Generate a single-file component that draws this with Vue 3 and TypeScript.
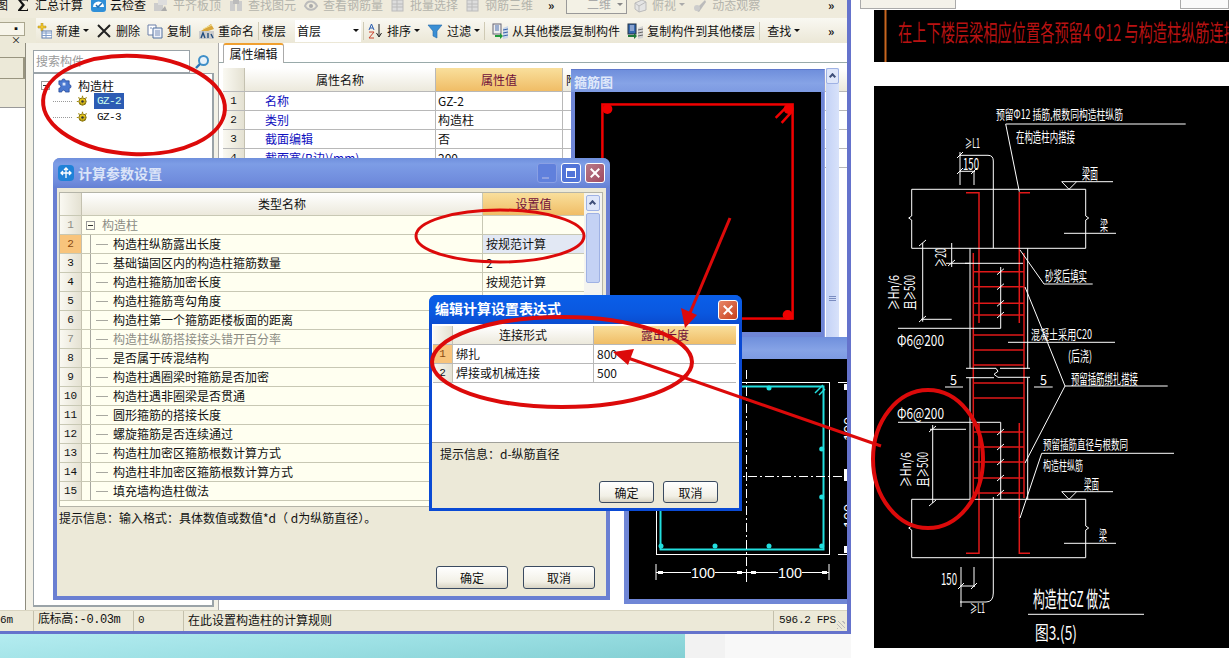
<script setup lang="ts">
type Tool = { icon?: string; label: string; arrow?: boolean; dim?: boolean; sep?: boolean }

const icons: Record<string, string> = {
  sigma: '<path d="M3 2h10v3l-1-1.500H6l4 4.500-4 5h6l1-2v3H3v-1l4-5-4-5z" fill="#111"/>',
  cloud: '<rect x="1" y="1" width="15" height="14" rx="3" fill="#2f8fd8"/><path d="M3 10a5.500 5.500 0 0 1 11 0" fill="#fff"/><path d="M6 8l2 2 4-4" stroke="#2070b8" stroke-width="1.600" fill="none"/>',
  greyA: '<rect x="1" y="6" width="9" height="8" fill="#ccc"/><path d="M5 2h9v6H5z" fill="#ddd"/><path d="M8 14l4-5 2 5z" fill="#aaa"/>',
  greyB: '<path d="M2 4h5v10H2zM9 4h5v10H9z" fill="#ccc"/><path d="M5 2h6v5H5z" fill="#bbb"/>',
  greyC: '<path d="M2 9c2-6 9-6 12 0-3 5-9 5-12 0z" fill="none" stroke="#bbb" stroke-width="2"/><circle cx="8" cy="9" r="2" fill="#aaa"/>',
  greyD: '<rect x="2" y="3" width="11" height="11" fill="#ddd" stroke="#bbb"/><path d="M2 7h11M2 10h11M7 3v11" stroke="#bbb"/>',
  greyE: '<path d="M3 6l7-3 4 2v8l-7 2-4-3z" fill="#e4e4e4" stroke="#bbb"/><path d="M3 6l4 3v6M7 9l7-4" stroke="#bbb" fill="none"/>',
  greyF: '<path d="M3 13L13 3l1 2-7 10z" fill="#bbb"/><circle cx="5" cy="11" r="3" fill="#ccc"/>',
  add: '<path d="M5 0h2v3h3v2H7v3H5V5H2V3h3z" fill="#f2c62c" stroke="#a98a18" stroke-width=".5"/><rect x="6" y="8" width="10" height="7" fill="#fff" stroke="#5c7db0"/><path d="M6 10h10M6 12.500h10M10 8v7" stroke="#7f9cc8"/>',
  del: '<path d="M2 2l12 12M14 2L2 14" stroke="#222" stroke-width="2"/>',
  copy: '<path d="M1 2h8v10H1z" fill="#fff" stroke="#6a7fa8"/><path d="M6 5h9v10H6z" fill="#eef2fa" stroke="#51709f"/><path d="M8 8h5M8 10h5M8 12h5M3 5h2" stroke="#7a90b8"/>',
  rename: '<path d="M3 8L13 1l3 5-9 3z" fill="#d9a63a"/><path d="M5 6l9-4" stroke="#f0de90"/><rect x="1" y="8" width="15" height="8" fill="#ccc"/><path d="M3 15l2-5 2 5M10 10v5M13 11l2 4" stroke="#234d7d" stroke-width="1.400" fill="none"/>',
  sort: '<path d="M12 1v12M9.500 10l2.500 4 2.500-4" stroke="#222" fill="none"/><path d="M2 7l2.500-6L7 7M3 5h3" stroke="#2a5db0" fill="none"/><path d="M2 9h5l-5 6h5" stroke="#c8402a" fill="none"/>',
  filter: '<path d="M1 2h14L10 8v7l-4-2V8z" fill="#3b8fd4" stroke="#2468a8" stroke-width=".6"/>',
  fromFloor: '<rect x="1" y="1" width="8" height="10" fill="#eee" stroke="#667"/><path d="M3 3h4M3 5h4M3 7h4" stroke="#4a6fb0"/><path d="M3 12h5v-2l3 3-3 3v-2H3z" fill="#1f9a3a"/><path d="M11 5l5-2v12l-5 1z" fill="#c9d6ea"/><path d="M11 7l5-1M11 10l5-1M11 13l5-1" stroke="#3a64a8"/>',
  toFloor: '<rect x="1" y="1" width="8" height="10" fill="#3568b0" stroke="#234"/><path d="M3 3h4M3 5h4M3 7h4" stroke="#dde"/><path d="M1 12h6v-2l3 3-3 3v-2H1z" fill="#1f7a3a"/><path d="M11 5l5-2v12l-5 1z" fill="#d4d4d4"/><path d="M11 7l5-1M11 10l5-1M11 13l5-1" stroke="#666"/>',
  search: '<circle cx="9.500" cy="6.500" r="4.500" fill="#e8f2fa" stroke="#3f8fc8" stroke-width="2"/><path d="M6 10l-4 4" stroke="#2c78b8" stroke-width="2.400"/>',
  puzzle: '<path d="M2 3h3a2 2 0 0 1 4 0h4v4a2 2 0 0 1 0 4v4H9a2 2 0 0 0-4 0H2v-4a2 2 0 0 0 0-4z" fill="#4a78d0" stroke="#1c3f90" stroke-width=".7"/><path d="M6 5h3v3H6z" fill="#dbe6fa"/>',
  gear: '<circle cx="8" cy="8" r="4.500" fill="#e5c51c" stroke="#6b5c10"/><circle cx="8" cy="8" r="1.600" fill="#333"/><path d="M8 1v14M1 8h14M3 3l10 10M13 3L3 13" stroke="#a08a12" stroke-width="1.500" stroke-dasharray="2 7.500"/>',
  move: '<rect width="16" height="16" rx="4" fill="#1f82d8"/><path d="M8 3v10M3 8h10M6 5l2-2 2 2M11 6l2 2-2 2M5 6L3 8l2 2" stroke="#fff" stroke-width="1.300" fill="none"/>',
}

const topTools: Tool[] = [
  { icon: 'sigma', label: '汇总计算' },
  { icon: 'cloud', label: '云检查' },
  { icon: 'greyA', label: '平齐板顶', dim: true },
  { icon: 'greyB', label: '查找图元', dim: true },
  { icon: 'greyC', label: '查看钢筋量', dim: true },
  { icon: 'greyD', label: '批量选择', dim: true },
  { icon: 'greyD', label: '钢筋三维', dim: true },
]
const leftTools: Tool[] = [
  { icon: 'add', label: '新建', arrow: true },
  { icon: 'del', label: '删除' },
  { icon: 'copy', label: '复制' },
  { icon: 'rename', label: '重命名' },
]
const rightTools: Tool[] = [
  { icon: 'sort', label: '排序', arrow: true },
  { icon: 'filter', label: '过滤', arrow: true, sep: true },
  { icon: 'fromFloor', label: '从其他楼层复制构件' },
  { icon: 'toFloor', label: '复制构件到其他楼层', sep: true },
  { label: '查找', arrow: true },
]

const propRows = [
  ['名称', 'GZ-2'],
  ['类别', '构造柱'],
  ['截面编辑', '否'],
  ['截面宽(B边)(mm)', '200'],
]

const paramRows: { name: string; value?: string; grey?: boolean; active?: boolean }[] = [
  { name: '构造柱', grey: true },
  { name: '构造柱纵筋露出长度', value: '按规范计算', active: true },
  { name: '基础锚固区内的构造柱箍筋数量', value: '2' },
  { name: '构造柱箍筋加密长度', value: '按规范计算' },
  { name: '构造柱箍筋弯勾角度' },
  { name: '构造柱第一个箍筋距楼板面的距离' },
  { name: '构造柱纵筋搭接接头错开百分率', grey: true },
  { name: '是否属于砖混结构' },
  { name: '构造柱遇圈梁时箍筋是否加密' },
  { name: '构造柱遇非圈梁是否贯通' },
  { name: '圆形箍筋的搭接长度' },
  { name: '螺旋箍筋是否连续通过' },
  { name: '构造柱加密区箍筋根数计算方式' },
  { name: '构造柱非加密区箍筋根数计算方式' },
  { name: '填充墙构造柱做法' },
]

const statusCells = ['6m', '底标高:-0.03m', '0', '在此设置构造柱的计算规则', '596.2 FPS']

// CAD detail, in screenshot coordinates
const stirrups = [271.7, 286.7, 303.3, 315, 335, 350, 365, 383, 398, 432, 447, 462, 478, 493]
const dimTicks = [271.7, 286.7, 303.3, 315, 432, 447, 462, 478, 493].map(
  (y) => `M997 ${y + 3}L1004 ${y - 3}`,
)
const cadWhite = [
  'M1005.700 124H1185.700M1005.700 124L1019.300 191.700',
  'M960 155.300H988Q993.300 155.300 993.300 161V248.300',
  'M960 152V185M974 171V185M960 171.300H975M957 158l6-6M957 174l6-6M971 174l6-6',
  'M911.700 189.300H1085.700M911.700 189.300V216l-3 2 3 2V248.300M1085.700 189.300V216l3 2-3 2V248.300M911.700 248.300H1085.700',
  'M1061.700 181.700H1113M1061.700 181.700L1069 189.300L1076.700 181.700',
  'M1064 233.300H1116',
  'M970 248.300V368.300M1027.700 248.300V368.300M970 377.700V499.300M1027.700 377.700V499.300',
  'M965 263.300H1023M898 328.300H1000.700M1000.700 267V328.300',
  'M922.700 243V321.700M921 319.300H951.700M951.700 243V267M946 263.300H970M919 246l7-6M919 322l7-6M948 266l7-6',
  'M1044 284H1092.700M1020 250L1044 284',
  'M1025 287L1041.700 328L1065 386M1008 342.300H1115',
  'M1065 386H1167.700M1065 386L1025 463',
  'M945 387H963M1034 387H1052.700',
  'M966 368.300H996l2 3-4 3 4 3H1030M966 377.700H994M1000 368.300H1030',
  'M898 422.300H1000.700M1000.700 422.300V499.300',
  'M932.700 425V503M930 429.300H966M929 432l7-6M929 506l7-6',
  'M1041.700 453.300H1174M1041.700 453.300L1020 518',
  'M1061.700 491.700H1113M1061.700 491.700L1069 499.300L1076.700 491.700',
  'M911.700 499.300H1085.700M911.700 499.300V526l-3 2 3 2V557.700M1085.700 499.300V526l3 2-3 2V557.700M911.700 557.700H1085.700',
  'M1064 543.300H1116',
  'M993.300 497V593Q993.300 602 986 602H960',
  'M961 567V607M974 567V587M960 586H975M958 589l6-6M971 589l6-6',
  'M1028 614.300H1144',
  ...dimTicks,
]
const cadRed = [
  'M966 192.700H979V323M1030 192.700H1019.300V323',
  'M973.300 253V498M1024 253V498',
  'M979 423V553.300H966M1019.300 423V553.300H1030',
  ...stirrups.map((y) => `M973.300 ${y}H1024`),
].join('')

const cadLabels = [
  { t: '预留Φ12 插筋,根数同构造柱纵筋', x: 996, y: 119, w: 127, s: 13 },
  { t: '在构造柱内搭接', x: 1016, y: 142, w: 59, s: 14 },
  { t: '≥L1', x: 965, y: 148, w: 15, s: 13 },
  { t: '150', x: 963, y: 170, w: 16, s: 16 },
  { t: '梁面', x: 1082, y: 179, w: 16, s: 15 },
  { t: '梁', x: 1100, y: 230, w: 8, s: 14 },
  { t: '砂浆后填实', x: 1045, y: 281, w: 42, s: 14 },
  { t: '混凝土采用C20', x: 1031, y: 339, w: 61, s: 13 },
  { t: '(后浇)', x: 1068, y: 361, w: 24, s: 14 },
  { t: 'Φ6@200', x: 897, y: 346, w: 47, s: 15 },
  { t: '5', x: 950, y: 385, w: 7, s: 14 },
  { t: '5', x: 1040, y: 385, w: 7, s: 14 },
  { t: '预留插筋绑扎搭接', x: 1071, y: 384, w: 67, s: 14 },
  { t: 'Φ6@200', x: 897, y: 419, w: 47, s: 15 },
  { t: '预留插筋直径与根数同', x: 1043, y: 449, w: 85, s: 13 },
  { t: '构造柱纵筋', x: 1043, y: 470, w: 40, s: 13 },
  { t: '梁面', x: 1084, y: 489, w: 15, s: 14 },
  { t: '梁', x: 1099, y: 540, w: 8, s: 14 },
  { t: '150', x: 941, y: 585, w: 16, s: 16 },
  { t: '≥L1', x: 970, y: 613, w: 15, s: 13 },
  { t: '构造柱GZ 做法', x: 1033, y: 607, w: 77, s: 22 },
  { t: '图3.(5)', x: 1035, y: 640, w: 42, s: 19 },
]
const cadTurned = [
  { t: '≥Hn/6', x: 899, y: 310, w: 35 },
  { t: '且≥500', x: 915, y: 310, w: 35 },
  { t: '≥20', x: 946, y: 267, w: 19 },
  { t: '≥Hn/6', x: 911, y: 487, w: 35 },
  { t: '且≥500', x: 928, y: 487, w: 35 },
]
</script>

<template>
  <div class="screen">
    <div class="left-col">
      <div class="app">
        <div class="bar-top">
          <span class="cut-first">图</span>
          <span v-for="t in topTools" :key="t.label" class="tool" :class="{ dim: t.dim }">
            <svg class="ic" viewBox="0 0 16 16" v-html="icons[t.icon!]"></svg>{{ t.label }}
          </span>
          <span class="more">»</span>
          <span class="view-combo">二维<i class="arrow"></i></span>
          <span class="tool dim"><svg class="ic" viewBox="0 0 16 16" v-html="icons.greyE"></svg>俯视<i class="arrow"></i></span>
          <span class="tool dim"><svg class="ic" viewBox="0 0 16 16" v-html="icons.greyF"></svg>动态观察</span>
          <span class="more push">»</span>
        </div>

        <div class="bar-main">
          <div class="dock-head"><span class="dock-tab">▪ ×</span></div>
          <span v-for="t in leftTools" :key="t.label" class="tool">
            <svg class="ic" viewBox="0 0 16 16" v-html="icons[t.icon!]"></svg>{{ t.label }}<i v-if="t.arrow" class="arrow"></i>
          </span>
          <i class="sep"></i>
          <span class="floor-label">楼层</span>
          <span class="floor-combo">首层<i class="arrow"></i></span>
          <i class="sep"></i>
          <template v-for="t in rightTools" :key="t.label">
            <span class="tool">
              <svg v-if="t.icon" class="ic" viewBox="0 0 16 16" v-html="icons[t.icon]"></svg>{{ t.label }}<i v-if="t.arrow" class="arrow"></i>
            </span>
            <i v-if="t.sep" class="sep wide"></i>
          </template>
          <span class="more push">»</span>
        </div>

        <div class="body">
          <div class="dock">
            <div class="dock-blank"></div>
            <div class="dock-btn"></div>
            <div class="dock-fill"></div>
            <div class="dock-white"></div>
          </div>

          <div class="tree-panel">
            <div class="search">
              <span class="search-input">搜索构件</span>
              <span class="search-btn"><svg viewBox="0 0 16 16" width="16" height="16" v-html="icons.search"></svg></span>
            </div>
            <div class="tree">
              <div class="tree-root">
                <i class="minus"></i>
                <svg class="tree-ic" viewBox="0 0 16 16" v-html="icons.puzzle"></svg>
                <span>构造柱</span>
              </div>
              <div class="tree-leaf">
                <svg class="leaf-ic" viewBox="0 0 16 16" v-html="icons.gear"></svg>
                <span class="gz selected">GZ-2</span>
              </div>
              <div class="tree-leaf">
                <svg class="leaf-ic" viewBox="0 0 16 16" v-html="icons.gear"></svg>
                <span class="gz">GZ-3</span>
              </div>
            </div>
          </div>

          <div class="prop-panel">
            <div class="tabs"><span class="tab">属性编辑</span></div>
            <div class="prop-table">
              <div class="prop-row prop-head">
                <span class="num"></span>
                <span class="c-name">属性名称</span>
                <span class="c-val hot">属性值</span>
                <span class="c-rest">附</span>
              </div>
              <div v-for="(r, i) in propRows" :key="r[0]" class="prop-row">
                <span class="num">{{ i + 1 }}</span>
                <span class="c-name link">{{ r[0] }}</span>
                <span class="c-val">{{ r[1] }}</span>
                <span class="c-rest"></span>
              </div>
            </div>

            <div class="sub-scroll">
              <span class="scroll-up"></span>
              <span class="sub-scroll-grip"></span>
            </div>

            <div class="sub-win win-stirrup">
              <div class="sub-title">箍筋图</div>
              <svg class="sub-view" viewBox="574 91 246 241">
                <rect x="601" y="103.500" width="191" height="215" fill="none" stroke="#f00000" stroke-width="2.500" />
                <circle cx="606" cy="108" r="5" fill="#f00000" />
                <circle cx="788" cy="108" r="5" fill="#f00000" />
                <circle cx="787" cy="315" r="5" fill="#f00000" />
                <path d="M775 117l13-13M781 122l10-11" stroke="#f00000" stroke-width="2.500" />
              </svg>
            </div>

            <div class="sub-win win-section">
              <div class="sub-title"></div>
              <svg class="sub-view" viewBox="628 360 218 240">
                <rect x="655.500" y="383.500" width="173" height="172" fill="none" stroke="#fff" />
                <rect x="659.500" y="387.500" width="163" height="163" fill="none" stroke="#22dede" stroke-width="2" />
                <g fill="#22dede">
                  <circle cx="768" cy="389" r="2.500" />
                  <circle cx="820.700" cy="450" r="2.500" />
                  <circle cx="820.700" cy="498" r="2.500" />
                  <circle cx="660" cy="547" r="2.500" />
                  <circle cx="714" cy="547" r="2.500" />
                  <circle cx="768" cy="547" r="2.500" />
                  <circle cx="820.700" cy="547" r="2.500" />
                </g>
                <path d="M814 394l8-8M818 396l6-6" stroke="#22dede" stroke-width="1.500" />
                <path d="M745.500 371V583M628 477.500H846" stroke="#fff" stroke-dasharray="9 3 2 3" fill="none" />
                <path d="M655 565V581M828 565V581M745.500 570V577M655 573.500H690M714 573.500H777M801 573.500H828M837 383.500H846M837 555.500H846" stroke="#fff" fill="none" />
                <path d="M657 572h5v3h-5zM736 572h5v3h-5zM750 572h5v3h-5zM821 572h5v3h-5zM843 385h3v6h-3zM843 470h3v12h-3zM843 547h3v7h-3z" fill="#fff" />
                <text class="dim-text" x="690" y="579" textLength="24" lengthAdjust="spacingAndGlyphs">100</text>
                <text class="dim-text" x="777" y="579" textLength="24" lengthAdjust="spacingAndGlyphs">100</text>
                <text class="dim-text" transform="translate(853 442) rotate(-90)" textLength="24" lengthAdjust="spacingAndGlyphs">100</text>
                <text class="dim-text" transform="translate(853 529) rotate(-90)" textLength="24" lengthAdjust="spacingAndGlyphs">100</text>
              </svg>
            </div>
          </div>
        </div>

        <div class="status">
          <span v-for="(s, i) in statusCells" :key="s" class="cell" :class="`cell-${i}`">{{ s }}</span>
          <span class="grip"></span>
        </div>
      </div>
      <div class="wallpaper">
        <div class="wall-teal"></div>
        <div class="wall-grey"></div>
      </div>
    </div>

    <div class="right-col">
      <div class="page-top">
        <span class="page-box"></span>
        <span class="page-box small"></span>
      </div>
      <svg class="cad-note" viewBox="874 10 355 52">
        <path d="M885.500 10V62" stroke="#c9661f" stroke-width="2" />
        <text x="898" y="41" class="note" textLength="340" lengthAdjust="spacingAndGlyphs">在上下楼层梁相应位置各预留4 Φ12 与构造柱纵筋连接</text>
      </svg>
      <svg class="cad-main" viewBox="874 86 355 562">
        <path :d="cadRed" stroke="#e01818" stroke-width="1.500" fill="none" />
        <path :d="cadWhite.join('')" stroke="#fff" fill="none" />
        <text
          v-for="l in cadLabels"
          :key="l.t + l.y"
          class="cad-text"
          :x="l.x"
          :y="l.y"
          :font-size="l.s"
          :textLength="l.w"
          lengthAdjust="spacingAndGlyphs"
        >{{ l.t }}</text>
        <text
          v-for="l in cadTurned"
          :key="l.t + l.y + l.x"
          class="cad-text"
          font-size="14"
          :transform="`translate(${l.x} ${l.y}) rotate(-90)`"
          :textLength="l.w"
          lengthAdjust="spacingAndGlyphs"
        >{{ l.t }}</text>
      </svg>
    </div>

    <div class="dialog calc">
      <div class="dlg-title">
        <svg class="dlg-ic" viewBox="0 0 16 16" v-html="icons.move"></svg>
        <span>计算参数设置</span>
        <span class="caption-btns">
          <i class="cap min"></i><i class="cap max"></i><i class="cap close faded"></i>
        </span>
      </div>
      <div class="calc-body">
        <div class="param-wrap">
          <div class="param-table">
            <div class="param-row param-head">
              <span class="num"></span>
              <span class="p-name">类型名称</span>
              <span class="p-val hot">设置值</span>
            </div>
            <div
              v-for="(r, i) in paramRows"
              :key="r.name"
              class="param-row"
              :class="{ grey: r.grey }"
            >
              <span class="num" :class="{ 'num-active': r.active }">{{ i + 1 }}</span>
              <span class="p-name" :class="i === 0 ? 'root' : 'child'">
                <i v-if="i === 0" class="minus"></i>{{ r.name }}
              </span>
              <span class="p-val" :class="{ 'val-active': r.active }">{{ r.value }}</span>
            </div>
          </div>
          <div class="param-scroll">
            <span class="scroll-up"></span>
            <span class="scroll-thumb"></span>
          </div>
        </div>
        <p class="hint">提示信息：输入格式：具体数值或数值*d（ d为纵筋直径）。</p>
        <div class="dlg-actions">
          <button class="btn wide">确定</button>
          <button class="btn wide">取消</button>
        </div>
      </div>
    </div>

    <div class="dialog expr">
      <div class="dlg-title">
        <span>编辑计算设置表达式</span>
        <span class="caption-btns"><i class="cap close"></i></span>
      </div>
      <div class="expr-white">
        <div class="expr-row expr-head">
          <span class="num"></span><span class="e-a">连接形式</span><span class="e-b hot">露出长度</span>
        </div>
        <div class="expr-row">
          <span class="num num-active">1</span><span class="e-a left">绑扎</span><span class="e-b left">800</span>
        </div>
        <div class="expr-row">
          <span class="num">2</span><span class="e-a left">焊接或机械连接</span><span class="e-b left">500</span>
        </div>
      </div>
      <div class="expr-foot">
        <p class="hint">提示信息：d-纵筋直径</p>
        <div class="dlg-actions">
          <button class="btn">确定</button>
          <button class="btn">取消</button>
        </div>
      </div>
    </div>

    <svg class="marks" viewBox="0 0 1229 658">
      <g fill="none" stroke="#dc0a0a">
        <ellipse cx="134" cy="105" rx="91" ry="49" stroke-width="4" transform="rotate(3 134 105)" />
        <ellipse cx="500" cy="236" rx="84" ry="26" stroke-width="3" />
        <ellipse cx="562" cy="362" rx="130" ry="45" stroke-width="4" />
        <ellipse cx="928" cy="459" rx="55" ry="69" stroke-width="4" />
        <path d="M730 218L690 313M881 446L628 358" stroke-width="3" />
      </g>
      <path d="M685 328L681 308L697 315zM613 352L634 349L628 365z" fill="#dc0a0a" />
    </svg>
  </div>
</template>

<style scoped>
.screen {
  position: relative;
  width: 1229px;
  height: 658px;
  overflow: hidden;
  display: flex;
  background: #fff;
  font-family: "Noto Sans CJK SC", "Liberation Sans", sans-serif;
  font-size: 12px;
  color: #111;
}

.left-col {
  width: 851px;
  flex: none;
  display: flex;
  flex-direction: column;
}

.app {
  height: 634px;
  flex: none;
  display: flex;
  flex-direction: column;
  border-right: 4px solid #6573cc;
  border-bottom: 3px solid #6573cc;
  background: #ece9d8;
  box-sizing: border-box;
}

.wallpaper {
  flex: 1;
  display: flex;
}
.wall-teal {
  width: 685px;
  background: linear-gradient(175deg, #b4ecf0 0%, #9ce0e4 50%, #84d0d4 100%);
}
.wall-grey {
  flex: 1;
  background: linear-gradient(90deg, #f2f2f2 0 40px, #f8f8f8 40px);
}

.bar-top {
  height: 18px;
  flex: none;
  display: flex;
  align-items: center;
  overflow: hidden;
  background: #efebdc;
  line-height: 10px;
  padding-bottom: 9px;
  box-sizing: border-box;
}
.cut-first {
  width: 15px;
  margin-left: -4px;
  margin-right: 4px;
  flex: none;
}

.tool {
  display: inline-flex;
  align-items: center;
  gap: 4px;
  margin-right: 7px;
  white-space: nowrap;
  flex: none;
}
.tool.dim {
  color: #b4b4ac;
}
.ic {
  width: 16px;
  height: 16px;
  flex: none;
}
.arrow {
  display: inline-block;
  width: 0;
  height: 0;
  margin-left: -1px;
  border: 3px solid transparent;
  border-top: 3px solid #111;
  border-bottom: 0;
}
.dim .arrow {
  border-top-color: #aaa;
}
.more {
  width: 14px;
  font-weight: 700;
  margin: 0 4px 0 8px;
  flex: none;
}
.more.push {
  margin-left: auto;
  margin-right: 5px;
}
.view-combo {
  width: 61px;
  height: 22px;
  margin: -4px 5px 0 0;
  flex: none;
  box-sizing: border-box;
  border: 1px solid #999;
  padding: 3px 0 0 20px;
  color: #aaa;
  display: flex;
  align-items: center;
  gap: 7px;
  background: #f3f1e5;
}
.view-combo .arrow {
  border-top-color: #888;
}

.bar-main {
  height: 25px;
  flex: none;
  display: flex;
  align-items: center;
  background: linear-gradient(#f9f8f2, #ebe7d6);
}
.dock-head {
  width: 36px;
  flex: none;
  align-self: stretch;
  background: #ece9d8;
}
.dock-tab {
  display: block;
  width: 25px;
  height: 14px;
  margin-top: 4px;
  box-sizing: border-box;
  border: 1px solid #aaa68e;
  border-left: 0;
  background: #f7f5ea;
  font-size: 10px;
  line-height: 11px;
  text-align: right;
  padding-right: 3px;
}
.sep {
  width: 1px;
  height: 18px;
  margin: 0 3px 0 -3px;
  background: #cfcab4;
  flex: none;
}
.sep.wide {
  margin-right: 7px;
}
.floor-combo {
  width: 66px;
  margin-right: 5px;
  padding: 2px 2px 3px;
  box-sizing: border-box;
  background: #fff;
  display: flex;
  align-items: center;
  justify-content: space-between;
  flex: none;
}
.floor-label {
  margin-right: 9px;
  white-space: nowrap;
  flex: none;
}

.body {
  flex: 1;
  min-height: 0;
  display: flex;
}
.dock {
  width: 26px;
  flex: none;
  display: flex;
  flex-direction: column;
  background: #ece9d8;
  border-right: 1px solid #8e8c7e;
  box-sizing: border-box;
}
.dock-blank {
  height: 14px;
}
.dock-btn {
  height: 22px;
  box-sizing: border-box;
  border: 1px solid #999580;
  border-left: 0;
  border-right-width: 2px;
}
.dock-fill {
  height: 28px;
}
.dock-white {
  flex: 1;
  background: #fff;
  border-top: 1px solid #999;
}

.tree-panel {
  width: 192px;
  flex: none;
  padding: 7px 4px 3px 7px;
  box-sizing: border-box;
  display: flex;
  flex-direction: column;
  background: #f3f1e6;
}
.search {
  height: 23px;
  flex: none;
  display: flex;
}
.search-input {
  width: 157px;
  box-sizing: border-box;
  border: 1px solid #9aa3a8;
  background: #fff;
  color: #9a9a9a;
  padding-left: 2px;
  line-height: 20px;
}
.search-btn {
  flex: 1;
  display: flex;
  align-items: center;
  justify-content: center;
}
.tree {
  flex: 1;
  background: #fff;
  border: 1px solid #9aa3a8;
  border-right-width: 2px;
  border-bottom-width: 2px;
  padding: 3px 0 0 7px;
}
.tree-root {
  display: flex;
  align-items: center;
  height: 16px;
}
.minus {
  position: relative;
  display: inline-block;
  width: 9px;
  height: 9px;
  box-sizing: border-box;
  border: 1px solid #999;
  background: linear-gradient(90deg, transparent 1px, #333 1px, #333 6px, transparent 6px) center / 100% 1px no-repeat;
  flex: none;
}
.tree-ic {
  width: 15px;
  height: 15px;
  margin: 0 6px 0 7px;
}
.tree-leaf {
  display: flex;
  align-items: center;
  height: 16px;
  margin-left: 12px;
  padding-left: 25px;
  background: repeating-linear-gradient(90deg, #999 0 1px, transparent 1px 2px) left center / 20px 1px no-repeat;
}
.leaf-ic {
  width: 13px;
  height: 13px;
  margin: 0 5px 0 -2px;
}
.gz {
  padding: 0 3px;
  font-family: "Liberation Mono", monospace;
  font-size: 11px;
  letter-spacing: -0.6px;
  line-height: 16px;
}
.gz.selected {
  background: #2c5cb4;
  color: #cfe;
}

.prop-panel {
  position: relative;
  flex: 1;
  min-width: 0;
  overflow: hidden;
  background: #fff;
  border-left: 1px solid #aaa;
  box-sizing: border-box;
}
.tabs {
  height: 19px;
  border-bottom: 1px solid #9aa;
  padding-left: 4px;
}
.tab {
  display: inline-block;
  width: 61px;
  height: 20px;
  box-sizing: border-box;
  text-align: center;
  border: 1px solid #aaa;
  border-top: 2px solid #f0a030;
  border-bottom: 0;
  background: #fff;
  border-radius: 3px 3px 0 0;
  line-height: 17px;
}
.prop-table {
  margin: 5px 0 0 4px;
}
.prop-row {
  display: flex;
  height: 19px;
  box-sizing: border-box;
  border-bottom: 1px solid #b8b8b8;
  line-height: 18px;
}
.prop-head {
  height: 24px;
  line-height: 23px;
  text-align: center;
  background: linear-gradient(#fff, #ece9dc);
}
.num {
  width: 22px;
  flex: none;
  text-align: center;
  background: linear-gradient(90deg, #faf9f2, #e4e1d2);
  border-right: 1px solid #c4c1b0;
  box-sizing: border-box;
  font-family: "Liberation Mono", monospace;
  font-size: 11px;
}
.c-name {
  width: 191px;
  flex: none;
  border-right: 1px solid #b8b8b8;
  box-sizing: border-box;
}
.c-name.link {
  padding-left: 20px;
  color: #1010c0;
}
.c-val {
  width: 127px;
  flex: none;
  padding-left: 2px;
  box-sizing: border-box;
  border-right: 1px solid #b8b8b8;
}
.c-rest {
  flex: 1;
  text-align: left;
  padding-left: 3px;
}
.hot {
  background: linear-gradient(#f9df9c, #f0bd66);
  color: #70103a;
  text-align: center;
  padding-left: 0;
}

.sub-win {
  position: absolute;
  display: flex;
  flex-direction: column;
  box-sizing: border-box;
  background: #6f86d6;
}
.sub-title {
  height: 22px;
  flex: none;
  padding: 3px 0 0 3px;
  box-sizing: border-box;
  font-size: 13px;
  font-weight: 700;
  line-height: 18px;
  color: #dfe8fa;
  background: linear-gradient(#6f8fdc, #86a3e6 60%, #7d9ae2);
}
.sub-view {
  display: block;
  background: #000;
}
.win-stirrup {
  left: 352px;
  top: 26px;
  width: 254px;
  height: 268px;
  padding: 0 4px 5px;
  border-top: 1px solid #5f78cc;
  border-right: 1px solid #8e9ede;
}
.win-stirrup .sub-title {
  margin: 0 -4px;
  padding-left: 3px;
}
.win-stirrup .sub-view {
  width: 246px;
  height: 241px;
}
.win-section {
  left: 405px;
  top: 294px;
  width: 224px;
  height: 267px;
  padding: 0 0 5px 5px;
}
.win-section .sub-title {
  margin-left: -5px;
}
.win-section .sub-view {
  width: 218px;
  height: 240px;
}
.dim-text {
  fill: #fff;
  font-size: 14px;
  font-family: "Liberation Sans", sans-serif;
}
.sub-scroll {
  position: absolute;
  left: 607px;
  top: 25px;
  width: 13px;
  height: 269px;
  background: linear-gradient(90deg, #c4d2f6, #d8e2fa);
}
.sub-scroll-grip {
  position: absolute;
  top: 228px;
  left: 3px;
  width: 7px;
  height: 6px;
  background: repeating-linear-gradient(#7a8cc0 0 1px, transparent 1px 2px);
}
.scroll-up {
  position: relative;
  display: block;
  height: 16px;
  border: 1px solid #9fb2e4;
  border-radius: 2px;
  box-sizing: border-box;
  background: #dfe7fa;
}
.scroll-up::after {
  content: "";
  position: absolute;
  left: 50%;
  top: 5px;
  width: 5px;
  height: 5px;
  margin-left: -3px;
  box-sizing: border-box;
  border-left: 2px solid #40507a;
  border-top: 2px solid #40507a;
  transform: rotate(45deg);
}

.status {
  height: 21px;
  flex: none;
  display: flex;
  align-items: center;
  background: #ece9d8;
  border-top: 1px solid #d8d4c0;
  box-sizing: border-box;
  position: relative;
  font-family: "Liberation Mono", "Noto Sans CJK SC", monospace;
  font-size: 11px;
}
.cell {
  height: 100%;
  box-sizing: border-box;
  border-right: 1px solid #c4c0ac;
  line-height: 18px;
  padding-left: 2px;
  flex: none;
}
.cell-0 {
  width: 34px;
  text-align: left;
  padding-left: 0;
}
.cell-1 {
  width: 100px;
  padding-left: 4px;
  font-size: 12px;
  letter-spacing: -0.4px;
}
.cell-2 {
  width: 50px;
  padding-left: 4px;
}
.cell-3 {
  width: 590px;
  padding-left: 4px;
  font-family: "Noto Sans CJK SC", sans-serif;
  font-size: 12px;
}
.cell-4 {
  flex: 1;
  padding-left: 5px;
  letter-spacing: -0.3px;
  border-right: 0;
}
.grip {
  position: absolute;
  right: 2px;
  bottom: 2px;
  width: 8px;
  height: 8px;
  background: repeating-linear-gradient(45deg, #bbb 0 1px, transparent 1px 3px);
}

.right-col {
  flex: 1;
  min-width: 0;
  padding-left: 23px;
  display: flex;
  flex-direction: column;
}
.page-top {
  height: 10px;
  flex: none;
  margin-left: -14px;
  display: flex;
  justify-content: space-between;
  overflow: hidden;
}
.page-box {
  width: 96px;
  height: 9px;
  box-sizing: border-box;
  border: 1px solid #aaa;
  border-top: 0;
  background: #f4f2ea;
}
.page-box.small {
  width: 49px;
  background: #fafafa;
}
.cad-note {
  width: 355px;
  height: 52px;
  flex: none;
  background: #000;
}
.note {
  fill: #b81212;
  font-size: 23px;
}
.cad-main {
  width: 355px;
  height: 562px;
  flex: none;
  margin-top: 24px;
  background: #000;
}
.cad-text {
  fill: #fff;
}

.dialog {
  position: absolute;
  box-sizing: border-box;
  display: flex;
  flex-direction: column;
  border-radius: 7px 7px 0 0;
}
.dlg-title {
  display: flex;
  align-items: center;
  font-size: 14px;
  font-weight: 700;
  flex: none;
}
.dlg-ic {
  width: 16px;
  height: 16px;
  margin-right: 4px;
}
.caption-btns {
  margin-left: auto;
  display: flex;
  gap: 4px;
}
.cap {
  position: relative;
  display: block;
  width: 20px;
  height: 20px;
  box-sizing: border-box;
  border: 1px solid #fff;
  border-radius: 3px;
  background: #3f6ce0;
}
.cap.min {
  background: #6080dc;
  border-color: #8aa0e4;
}
.cap.min::after {
  content: "";
  position: absolute;
  left: 4px;
  bottom: 3px;
  width: 7px;
  height: 2px;
  background: #8ea0e0;
}
.cap.max {
  background: #5174d8;
}
.cap.max::after {
  content: "";
  position: absolute;
  left: 4px;
  top: 4px;
  width: 10px;
  height: 10px;
  box-sizing: border-box;
  border: 1px solid #fff;
  border-top-width: 3px;
}
.cap.close {
  background: linear-gradient(135deg, #e8886a, #c8401c);
}
.cap.close.faded {
  background: linear-gradient(135deg, #b87a8a, #a04a60);
}
.cap.close::before,
.cap.close::after {
  content: "";
  position: absolute;
  left: 3px;
  top: 8px;
  width: 12px;
  height: 2px;
  background: #fff;
  transform: rotate(45deg);
}
.cap.close::after {
  transform: rotate(-45deg);
}

.calc {
  left: 53px;
  top: 158px;
  width: 557px;
  height: 442px;
  background: #6a7fd2;
  padding: 0 4px 4px;
}
.calc .dlg-title {
  height: 30px;
  margin: 0 -4px;
  padding: 0 5px;
  color: #dbe4f8;
  border-radius: 7px 7px 0 0;
  background: linear-gradient(#6f8fdc, #7d9de6 20%, #6f8bdc 80%, #6480d4);
}
.calc-body {
  flex: 1;
  display: flex;
  flex-direction: column;
  background: #ece9d8;
  padding: 4px 3px 7px 2px;
}
.param-wrap {
  height: 315px;
  flex: none;
  display: flex;
  background: #fff;
  border: 1px solid #b4b4a8;
  box-sizing: border-box;
}
.param-table {
  width: 524px;
  background: #fffff0;
  flex: none;
}
.param-row {
  display: flex;
  height: 19px;
  box-sizing: border-box;
  line-height: 18px;
  border-bottom: 1px solid #c8c8b4;
}
.param-head {
  height: 23px;
  line-height: 22px;
  text-align: center;
  background: linear-gradient(#fff, #ece9dc);
}
.p-name {
  width: 401px;
  flex: none;
  box-sizing: border-box;
  border-right: 1px solid #c8c8b4;
  display: flex;
  align-items: center;
  justify-content: center;
  white-space: nowrap;
  position: relative;
}
.p-name.child {
  justify-content: flex-start;
  padding-left: 31px;
  background:
    linear-gradient(#a8a8a0, #a8a8a0) 8px 0 / 1px 100% no-repeat,
    linear-gradient(#a8a8a0, #a8a8a0) 14px 50% / 12px 1px no-repeat;
}
.p-name.root {
  justify-content: flex-start;
  padding-left: 4px;
  gap: 7px;
}
.p-val {
  flex: 1;
  padding-left: 3px;
  box-sizing: border-box;
  white-space: nowrap;
}
.p-val.hot {
  padding-left: 0;
}
.val-active {
  background: #e2e8f4;
}
.grey {
  color: #8c8c84;
}
.num-active {
  background: #f8c47c;
  color: #8a4a10;
}
.param-scroll {
  flex: 1;
  position: relative;
  padding: 2px 2px 0;
  background: #f4f4f0;
}
.scroll-thumb {
  display: block;
  height: 70px;
  margin-top: 2px;
  border-radius: 2px;
  background: #c4d2f4;
  border: 1px solid #9fb2e4;
  box-sizing: border-box;
}
.hint {
  margin: 2px 0 0 0;
  line-height: 18px;
  white-space: nowrap;
}
.dlg-actions {
  margin-top: auto;
  display: flex;
  justify-content: flex-end;
  gap: 9px;
}
.calc .dlg-actions {
  gap: 15px;
  padding-right: 8px;
}
.btn {
  width: 55px;
  height: 22px;
  padding: 0;
  font: inherit;
  color: #111;
  border: 1px solid #3a4a60;
  border-radius: 3px;
  background: linear-gradient(#fff, #f2f0e6 70%, #d8d4c4);
}
.btn.wide {
  width: 72px;
  height: 23px;
}

.expr {
  left: 429px;
  top: 295px;
  width: 313px;
  height: 216px;
  background: #0a4ad4;
  padding: 0 3px 3px;
}
.expr .dlg-title {
  height: 29px;
  margin: 0 -3px;
  padding: 0 4px 4px 6px;
  color: #fff;
  border-radius: 7px 7px 0 0;
  background: linear-gradient(#0a5ee8, #0a58e0 60%, #0a4cd0);
  box-sizing: border-box;
}
.expr .cap {
  margin-top: 4px;
}
.expr-white {
  height: 118px;
  flex: none;
  background: #fff;
  padding: 2px 3px 0 1px;
  box-sizing: border-box;
}
.expr-row {
  display: flex;
  height: 19px;
  box-sizing: border-box;
  line-height: 18px;
  border-bottom: 1px solid #b8b8b8;
  text-align: center;
}
.expr-head {
  background: linear-gradient(#fff, #ece9dc);
}
.expr .num {
  width: 20px;
}
.e-a {
  width: 141px;
  flex: none;
  border-right: 1px solid #b8b8b8;
  box-sizing: border-box;
}
.e-b {
  flex: 1;
}
.left {
  text-align: left;
  padding-left: 3px;
}
.expr-foot {
  flex: 1;
  display: flex;
  flex-direction: column;
  background: #ece9d8;
  border-top: 1px solid #a0a09a;
  padding: 0 21px 5px 8px;
}

.marks {
  position: absolute;
  left: 0;
  top: 0;
  width: 1229px;
  height: 658px;
  pointer-events: none;
}
</style>
